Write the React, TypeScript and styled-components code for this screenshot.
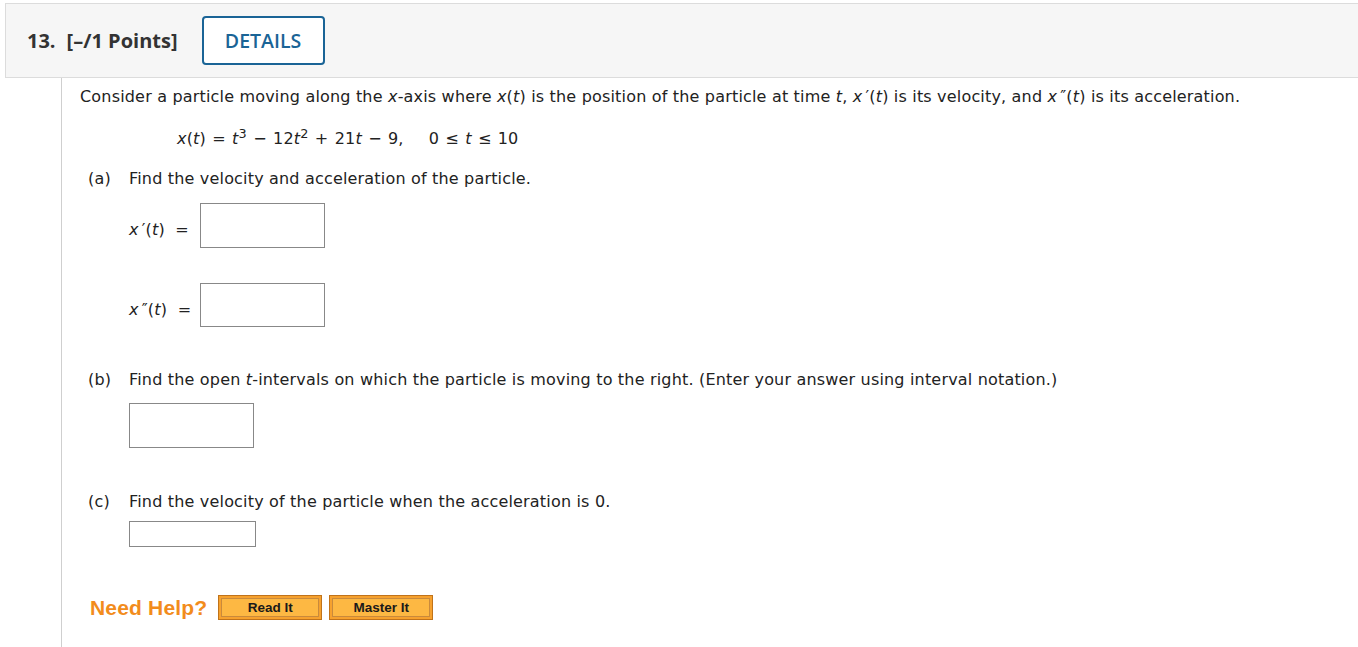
import styled, { createGlobalStyle } from "styled-components";

const Global = createGlobalStyle`
  body {
    margin: 0;
    background: #fff;
  }
`;

const Header = styled.header`
  display: flex;
  align-items: center;
  margin: 3px 0 0 5px;
  height: 73px;
  padding-left: 21px;
  background: #f6f6f6;
  border: 1px solid #dcdcdc;
  border-right: none;
  font-family: "Open Sans", sans-serif;
`;

const Number = styled.span`
  font-size: 20px;
  font-weight: 700;
  color: #333;
  margin-right: 11px;
`;

const Points = styled.span`
  font-size: 20px;
  font-weight: 700;
  color: #333;
`;

const DetailsButton = styled.button`
  margin-left: 24px;
  width: 123px;
  height: 49px;
  border: 2px solid #1a6496;
  border-radius: 4px;
  background: #fff;
  color: #1a6496;
  font-family: "Open Sans", sans-serif;
  font-size: 19.5px;
  font-weight: 600;
`;

const Body = styled.main`
  margin-left: 61px;
  border-left: 1px solid #cfcfcf;
  padding: 9px 0 22px 18px;
  font-family: "DejaVu Sans", Verdana, sans-serif;
  font-size: 16px;
  letter-spacing: 0.18px;
  color: #222;
  min-height: 540px;
`;

const Para = styled.p`
  margin: 0;
  line-height: 20px;
`;

const Equation = styled.div`
  margin: 22px 0 0 97px;
  line-height: 20px;
  word-spacing: 1px;
`;

const Sup = styled.sup`
  font-size: 0.8em;
  line-height: 0;
`;

const Prime = styled.span`
  margin-left: 3px;
`;

const PartTitle = styled.div<{ $top: number }>`
  display: flex;
  margin: ${(p) => p.$top}px 0 0 8px;
  line-height: 20px;
`;

const PartLetter = styled.span`
  width: 41px;
`;

const AnswerRow = styled.div<{ $top: number }>`
  display: flex;
  align-items: center;
  margin: ${(p) => p.$top}px 0 0 49px;
`;

const Label = styled.span`
  width: 71px;
  padding-top: 8px;
`;

const AnswerBox = styled.div<{ $w: number; $h: number }>`
  box-sizing: border-box;
  width: ${(p) => p.$w}px;
  height: ${(p) => p.$h}px;
  border: 1px solid #888;
  background: #fff;
`;

const Help = styled.div`
  display: flex;
  align-items: center;
  margin: 48px 0 0 10px;
  gap: 7px;
`;

const NeedHelp = styled.span`
  font-family: "Liberation Sans", Arial, sans-serif;
  font-weight: 700;
  font-size: 21px;
  color: #f28c1c;
  margin-right: 4px;
`;

const HelpButton = styled.button`
  width: 104px;
  height: 25px;
  padding: 0;
  background: #fdb843;
  border: 1px solid #c0731a;
  box-shadow: inset 0 0 0 2px #f6a12e, inset 0 0 0 3px #c98a3c;
  font-family: "Liberation Sans", Arial, sans-serif;
  font-weight: 700;
  font-size: 13.5px;
  color: #1a1a1a;
`;

export default function App() {
  return (
    <>
      <Global />
      <Header>
        <Number>13.</Number>
        <Points>[–/1 Points]</Points>
        <DetailsButton>DETAILS</DetailsButton>
      </Header>
      <Body>
        <Para>
          Consider a particle moving along the <i>x</i>-axis where <i>x</i>(<i>t</i>) is the
          position of the particle at time <i>t</i>, <i>x</i>
          <Prime>′</Prime>(<i>t</i>) is its velocity, and <i>x</i>
          <Prime>″</Prime>(<i>t</i>) is its acceleration.
        </Para>
        <Equation>
          <i>x</i>(<i>t</i>) = <i>t</i>
          <Sup>3</Sup> − 12<i>t</i>
          <Sup>2</Sup> + 21<i>t</i> − 9,&nbsp;&nbsp;&nbsp;&nbsp;0 ≤ <i>t</i> ≤ 10
        </Equation>
        <PartTitle $top={20}>
          <PartLetter>(a)</PartLetter>
          Find the velocity and acceleration of the particle.
        </PartTitle>
        <AnswerRow $top={14}>
          <Label>
            <i>x</i>
            <Prime>′</Prime>(<i>t</i>)&nbsp;&nbsp;=
          </Label>
          <AnswerBox $w={125} $h={45} />
        </AnswerRow>
        <AnswerRow $top={35}>
          <Label>
            <i>x</i>
            <Prime>″</Prime>(<i>t</i>)&nbsp;&nbsp;=
          </Label>
          <AnswerBox $w={125} $h={44} />
        </AnswerRow>
        <PartTitle $top={43}>
          <PartLetter>(b)</PartLetter>
          Find the open&nbsp;<i>t</i>-intervals on which the particle is moving to the right. (Enter
          your answer using interval notation.)
        </PartTitle>
        <AnswerRow $top={13}>
          <AnswerBox $w={125} $h={45} />
        </AnswerRow>
        <PartTitle $top={44}>
          <PartLetter>(c)</PartLetter>
          Find the velocity of the particle when the acceleration is 0.
        </PartTitle>
        <AnswerRow $top={9}>
          <AnswerBox $w={127} $h={26} />
        </AnswerRow>
        <Help>
          <NeedHelp>Need Help?</NeedHelp>
          <HelpButton>Read It</HelpButton>
          <HelpButton>Master It</HelpButton>
        </Help>
      </Body>
    </>
  );
}
